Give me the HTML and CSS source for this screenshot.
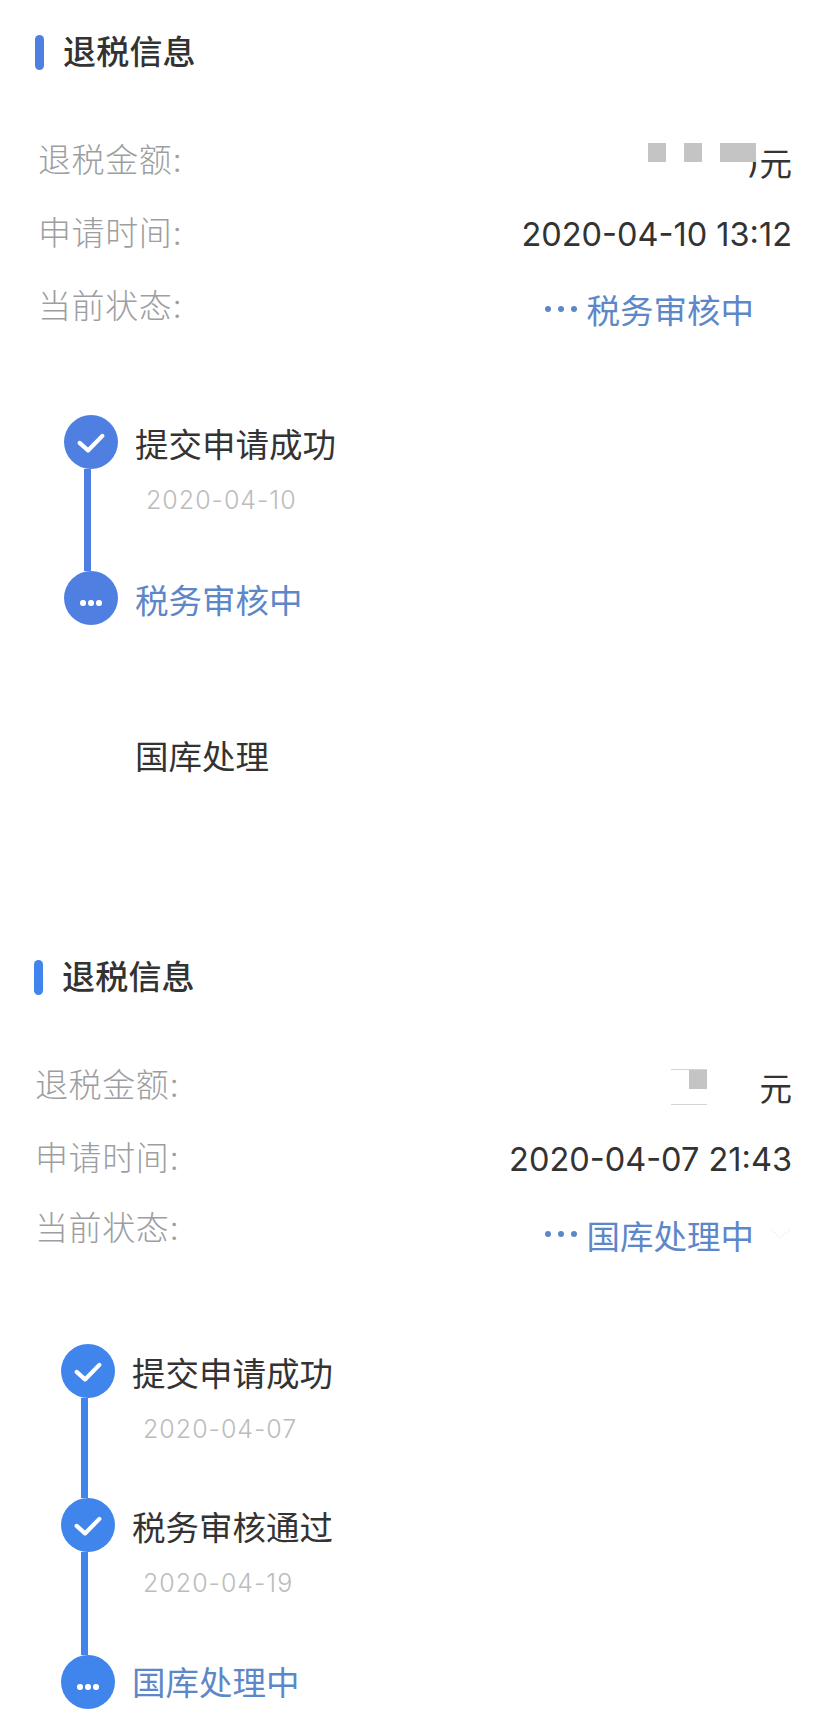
FILE: index.html
```html
<!DOCTYPE html>
<html lang="zh-CN">
<head>
<meta charset="utf-8">
<title>退税信息</title>
<link rel="stylesheet" href="styles.css">
</head>
<body>
<section class="card card-a">
  <h2 class="title"><span class="bar"></span>退税信息</h2>
  <div class="rows">
    <div class="row">
      <span class="label">退税金额:</span>
      <span class="value amount-a"><span class="blocks"><i class="blk"></i><i class="blk"></i><i class="blk wide"></i></span><span class="tail">)</span>元</span>
    </div>
    <div class="row">
      <span class="label">申请时间:</span>
      <span class="value">2020-04-10 13:12</span>
    </div>
    <div class="row">
      <span class="label">当前状态:</span>
      <span class="status"><span class="dots"><i></i><i></i><i></i></span>税务审核中<svg class="chev chev-a" viewBox="0 0 24 12"><path d="M2 1l10 9 10-9"/></svg></span>
    </div>
  </div>
  <ol class="timeline">
    <li class="step">
      <div class="rail"><span class="node"><svg viewBox="0 0 24 24"><path d="M5.500 12.500l4.800 4.300 8.200-8.300"/></svg></span><span class="line"></span></div>
      <div class="body"><div class="name">提交申请成功</div><div class="date">2020-04-10</div></div>
    </li>
    <li class="step">
      <div class="rail"><span class="node"><span class="mini"><i></i><i></i><i></i></span></span></div>
      <div class="body"><div class="name current">税务审核中</div></div>
    </li>
    <li class="step last">
      <div class="rail"></div>
      <div class="body"><div class="name">国库处理</div></div>
    </li>
  </ol>
</section>

<section class="card card-b">
  <h2 class="title"><span class="bar"></span>退税信息</h2>
  <div class="rows">
    <div class="row">
      <span class="label">退税金额:</span>
      <span class="value amount-b"><span class="smudge"><i class="blk"></i></span>元</span>
    </div>
    <div class="row">
      <span class="label">申请时间:</span>
      <span class="value">2020-04-07 21:43</span>
    </div>
    <div class="row">
      <span class="label">当前状态:</span>
      <span class="status"><span class="dots"><i></i><i></i><i></i></span>国库处理中<svg class="chev" viewBox="0 0 24 12"><path d="M2 1l10 9 10-9"/></svg></span>
    </div>
  </div>
  <ol class="timeline">
    <li class="step">
      <div class="rail"><span class="node"><svg viewBox="0 0 24 24"><path d="M5.500 12.500l4.800 4.300 8.200-8.300"/></svg></span><span class="line"></span></div>
      <div class="body"><div class="name">提交申请成功</div><div class="date">2020-04-07</div></div>
    </li>
    <li class="step">
      <div class="rail"><span class="node"><svg viewBox="0 0 24 24"><path d="M5.500 12.500l4.800 4.300 8.200-8.300"/></svg></span><span class="line"></span></div>
      <div class="body"><div class="name">税务审核通过</div><div class="date">2020-04-19</div></div>
    </li>
    <li class="step">
      <div class="rail"><span class="node"><span class="mini"><i></i><i></i><i></i></span></span></div>
      <div class="body"><div class="name current">国库处理中</div></div>
    </li>
  </ol>
</section>
</body>
</html>
```

FILE: styles.css
```css
* { box-sizing: border-box; }
html, body { margin: 0; padding: 0; background: #fff; }
body {
  width: 828px;
  height: 1727px;
  overflow: hidden;
  font-family: "Inter", "Noto Sans CJK SC", sans-serif;
  color: #333;
}
.card { --accent: #4f80e1; padding-right: 36px; }
.card-a { padding-top: 35px; padding-left: 35px; height: 960px; }
.card-b { --accent: #4085ec; padding-left: 34px; }

.title {
  display: flex;
  align-items: center;
  margin: 0;
  height: 35px;
  font-size: 33px;
  font-weight: 500;
  letter-spacing: .2px;
  line-height: 35px;
  color: #333;
}
.bar {
  width: 9px;
  height: 35px;
  margin-right: 19px;
  border-radius: 5px;
  background: var(--accent);
}

.rows { margin-top: 55px; }
.card-a .rows { padding-left: 3px; }
.card-b .rows { padding-left: 1px; }
.row {
  display: flex;
  justify-content: space-between;
  align-items: center;
  height: 73px;
}
.card-b .row:last-child { height: 68px; }
.label {
  font-size: 33px;
  font-weight: 300;
  letter-spacing: .6px;
  color: #9c9ea2;
  transform: translateY(-4px);
}
.value {
  display: flex;
  align-items: center;
  font-size: 32.500px;
  color: #333;
}
.status {
  display: flex;
  align-items: center;
  font-size: 33.500px;
  color: #5d87c8;
  transform: translateY(4px);
}
.card-a .status { transform: translateY(1px); }
.dots { display: flex; gap: 7px; margin-right: 10px; }
.dots i { width: 6px; height: 6px; border-radius: 50%; background: #5d87c8; }
.chev { width: 23px; height: 12px; margin-left: 15px; }
.chev path { fill: none; stroke: #e2e2e2; stroke-width: 1; stroke-dasharray: 2 2; }
.chev-a { opacity: .2; }

.blocks { display: flex; gap: 18px; transform: translate(1px, -9px); }
.blk { display: block; width: 18px; height: 19px; background: #c4c4c4; }
.blk.wide { width: 36px; }
.tail { margin-left: -8px; width: 12px; overflow: hidden; color: #333; }
.smudge {
  display: flex;
  justify-content: flex-end;
  width: 36px;
  height: 36px;
  margin-right: 52px;
  border-top: 1px solid #d4d4d4;
  border-bottom: 1px solid #d4d4d4;
}

.timeline { list-style: none; margin: 71px 0 0; padding: 0; }
.card-a .timeline { padding-left: 29px; }
.card-b .timeline { padding-left: 27px; margin-top: 80px; }
.step { display: flex; height: 156px; }
.card-b .step:first-child { height: 154px; }
.card-b .step:nth-child(2) { height: 157px; }
.rail {
  display: flex;
  flex-direction: column;
  align-items: center;
  width: 54px;
  flex: none;
}
.node {
  display: flex;
  align-items: center;
  justify-content: center;
  width: 54px;
  height: 54px;
  flex: none;
  border-radius: 50%;
  background: var(--accent);
}
.node svg { width: 42px; height: 42px; }
.node path { fill: none; stroke: #fff; stroke-width: 2.400; stroke-linecap: round; stroke-linejoin: round; }
.mini { display: flex; gap: 2.500px; transform: translateY(5px); }
.mini i { width: 5.500px; height: 5.500px; border-radius: 50%; background: #fff; }
.line { width: 7px; flex: 1; margin-right: 8px; background: var(--accent); }
.body { margin-left: 17px; padding-top: 3px; }
.name { font-size: 33.500px; line-height: 54px; color: #333; }
.name.current { color: #5d87c8; }
.card-b .name.current { transform: translateY(-2px); }
.date {
  margin: 3px 0 0 11px;
  font-size: 25px;
  line-height: 50px;
  letter-spacing: 1px;
  color: #bcbcbc;
  font-weight: 300;
}
```
